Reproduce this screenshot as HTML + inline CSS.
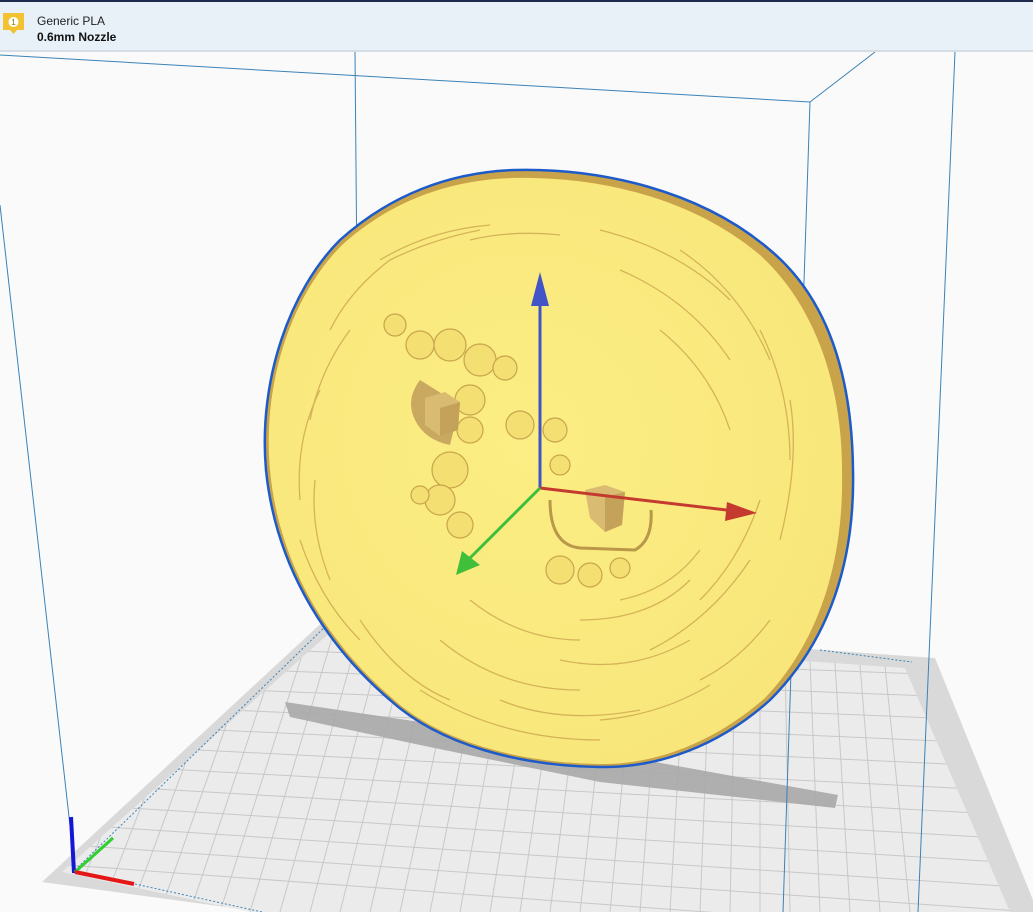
<!DOCTYPE html><html><head><meta charset="utf-8"><style>
html,body{margin:0;padding:0;width:1033px;height:912px;overflow:hidden;background:#fafafa;font-family:"Liberation Sans","DejaVu Sans",sans-serif}
.hdr{position:absolute;left:0;top:0;width:1033px;height:52px;background:#e8f0f8;border-top:2px solid #1d2a4d;border-bottom:2px solid #d6dde4;box-sizing:border-box;overflow:hidden}
.t1{position:absolute;left:37px;top:12px;font-size:12px;color:#222}
.t2{position:absolute;left:37px;top:28px;font-size:12px;color:#111;font-weight:bold}
svg{position:absolute;left:0;top:0}
</style></head><body>
<svg width="1033" height="912" viewBox="0 0 1033 912">
<defs>
<clipPath id="pl"><polygon points="62,872 335,628 905,668 1010,912 250,912"/></clipPath>
<radialGradient id="dg" cx="0.45" cy="0.45" r="0.6"><stop offset="0" stop-color="#fcee84"/><stop offset="1" stop-color="#f8e67a"/></radialGradient>
</defs>
<polygon points="42,882 330,615 935,658 1033,900 1033,912 262,912" fill="#d9d9d9"/>
<polygon points="62,872 335,628 905,668 1010,912 250,912" fill="#ebebeb"/>
<g clip-path="url(#pl)" stroke="#c8c8c8" stroke-width="1">
<line x1="335" y1="628" x2="250" y2="912"/><line x1="360" y1="630" x2="280" y2="912"/><line x1="385" y1="631" x2="310" y2="912"/><line x1="410" y1="633" x2="340" y2="912"/><line x1="435" y1="635" x2="370" y2="912"/><line x1="460" y1="637" x2="400" y2="912"/><line x1="485" y1="638" x2="430" y2="912"/><line x1="510" y1="640" x2="460" y2="912"/><line x1="535" y1="642" x2="490" y2="912"/><line x1="560" y1="644" x2="520" y2="912"/><line x1="585" y1="645" x2="550" y2="912"/><line x1="610" y1="647" x2="580" y2="912"/><line x1="635" y1="649" x2="610" y2="912"/><line x1="660" y1="650" x2="640" y2="912"/><line x1="685" y1="652" x2="670" y2="912"/><line x1="710" y1="654" x2="700" y2="912"/><line x1="735" y1="656" x2="730" y2="912"/><line x1="760" y1="657" x2="760" y2="912"/><line x1="785" y1="659" x2="790" y2="912"/><line x1="810" y1="661" x2="820" y2="912"/><line x1="835" y1="663" x2="850" y2="912"/><line x1="860" y1="665" x2="880" y2="912"/><line x1="885" y1="666" x2="910" y2="912"/><line x1="310" y1="630" x2="220" y2="912"/><line x1="285" y1="630" x2="190" y2="912"/><line x1="260" y1="630" x2="160" y2="912"/><line x1="235" y1="630" x2="130" y2="912"/><line x1="210" y1="630" x2="100" y2="912"/><line x1="185" y1="630" x2="70" y2="912"/>
<line x1="0" y1="660" x2="1033" y2="700"/><line x1="0" y1="680" x2="1033" y2="722"/><line x1="0" y1="700" x2="1033" y2="745"/><line x1="0" y1="720" x2="1033" y2="768"/><line x1="0" y1="740" x2="1033" y2="792"/><line x1="0" y1="760" x2="1033" y2="816"/><line x1="0" y1="780" x2="1033" y2="840"/><line x1="0" y1="800" x2="1033" y2="864"/><line x1="0" y1="820" x2="1033" y2="888"/><line x1="0" y1="840" x2="1033" y2="912"/><line x1="0" y1="860" x2="1033" y2="936"/><line x1="0" y1="640" x2="1033" y2="678"/>
</g>
<polygon points="285,702 420,722 600,752 838,795 835,808 600,782 420,745 290,717" fill="#a8a8a8" opacity="0.9"/>
<g stroke="#3b82b8" stroke-width="1" fill="none">
<line x1="0" y1="55" x2="810" y2="102"/><line x1="810" y1="102" x2="875" y2="52"/>
<line x1="810" y1="102" x2="783" y2="912"/><line x1="955" y1="52" x2="918" y2="912"/>
<line x1="355" y1="52" x2="360" y2="625"/><line x1="0" y1="205" x2="75" y2="870"/>
<line x1="75" y1="870" x2="330" y2="622" stroke-dasharray="2,2"/>
<line x1="135" y1="884" x2="262" y2="912" stroke-dasharray="2,2"/>
<line x1="820" y1="650" x2="912" y2="662" stroke-dasharray="2,2"/>
</g>
<path d="M515,170 C600,168 700,190 770,250 C830,300 852,380 853,470 C855,560 830,640 770,700 C720,745 660,768 600,767 C520,766 440,745 390,700 C320,640 275,560 266,470 C258,380 290,290 340,240 C390,195 450,172 515,170Z" fill="#c9a34a"/>
<path d="M512,178 C595,176 690,196 760,255 C815,305 842,385 842,470 C844,560 820,640 765,698 C715,742 655,765 600,764 C520,763 440,742 392,698 C322,638 278,558 270,470 C262,382 292,295 342,245 C392,200 450,180 512,178Z" fill="url(#dg)"/>
<g stroke="#c9a24c" stroke-width="1.3" fill="none" opacity="0.75">
<path d="M330,330 q20,-40 60,-70 q40,-20 90,-30"/><path d="M310,420 q10,-50 40,-90"/><path d="M300,500 q-5,-60 20,-110"/><path d="M330,580 q-20,-50 -15,-100"/><path d="M600,230 q80,20 130,70"/><path d="M620,270 q70,30 110,90"/><path d="M660,330 q50,40 70,100"/><path d="M760,330 q30,60 30,130"/><path d="M700,600 q40,-40 60,-100"/><path d="M650,650 q60,-30 100,-90"/><path d="M440,640 q60,50 140,50"/><path d="M420,690 q80,50 180,50"/><path d="M500,700 q60,25 140,10"/><path d="M360,620 q40,60 90,80"/><path d="M580,620 q70,0 110,-40"/><path d="M560,660 q70,15 130,-20"/><path d="M700,680 q40,-20 70,-60"/><path d="M600,720 q60,-5 110,-35"/><path d="M470,240 q40,-10 90,-5"/><path d="M380,260 q50,-30 110,-35"/>
<path d="M300,540 q20,60 60,100"/><path d="M680,250 q60,40 90,110"/><path d="M790,400 q10,60 -10,140"/><path d="M470,600 q50,40 110,40"/><path d="M620,600 q50,-10 80,-50"/>
</g>
<path d="M515,170 C600,168 700,190 770,250 C830,300 852,380 853,470 C855,560 830,640 770,700 C720,745 660,768 600,767 C520,766 440,745 390,700 C320,640 275,560 266,470 C258,380 290,290 340,240 C390,195 450,172 515,170Z" fill="none" stroke="#1c5bc9" stroke-width="2.5"/>
<g fill="#f3df72" stroke="#c9a44c" stroke-width="1.2">
<circle cx="395" cy="325" r="11"/><circle cx="420" cy="345" r="14"/><circle cx="450" cy="345" r="16"/><circle cx="480" cy="360" r="16"/><circle cx="505" cy="368" r="12"/><circle cx="470" cy="400" r="15"/><circle cx="470" cy="430" r="13"/><circle cx="450" cy="470" r="18"/><circle cx="440" cy="500" r="15"/><circle cx="460" cy="525" r="13"/><circle cx="420" cy="495" r="9"/><circle cx="520" cy="425" r="14"/><circle cx="555" cy="430" r="12"/><circle cx="560" cy="465" r="10"/><circle cx="560" cy="570" r="14"/><circle cx="590" cy="575" r="12"/><circle cx="620" cy="568" r="10"/>
</g>
<path d="M420,380 q-15,20 -5,40 q10,20 35,25 l10,-40z" fill="#c9a860"/>
<polygon points="425,398 445,392 460,402 458,430 440,436 425,425" fill="#d9bb72"/><polygon points="440,408 460,402 458,430 440,436" fill="#c5a25a"/>
<path d="M550,500 q0,45 30,48 l55,2 q18,-10 16,-40" fill="none" stroke="#b9984a" stroke-width="3"/>
<polygon points="585,490 605,485 625,492 622,525 605,532 590,518" fill="#d9bb72"/><polygon points="605,497 625,492 622,525 605,532" fill="#c5a25a"/>
<line x1="540" y1="488" x2="540" y2="300" stroke="#4154c4" stroke-width="3"/>
<polygon points="540,272 531,306 549,306" fill="#4255c8"/>
<line x1="540" y1="488" x2="735" y2="511" stroke="#c43a2f" stroke-width="3"/>
<polygon points="757,513 727,502 725,521" fill="#c43a2f"/>
<line x1="540" y1="488" x2="470" y2="558" stroke="#3fbf3a" stroke-width="3"/>
<polygon points="456,575 462,551 480,565" fill="#3fbf3a"/>
<line x1="71" y1="817" x2="74" y2="873" stroke="#1517d6" stroke-width="4"/>
<line x1="75" y1="872" x2="113" y2="838" stroke="#2fd12f" stroke-width="3"/>
<line x1="75" y1="872" x2="134" y2="884" stroke="#e51616" stroke-width="4"/>
</svg>
<div class="hdr">
<svg width="26" height="26" style="left:1px;top:9px" viewBox="0 0 26 26"><path d="M2,2 h21 v17 h-7 l-3.5,4 l-3.5,-4 h-7z" fill="#f3c230"/><circle cx="12.5" cy="11" r="5" fill="#fff"/><text x="12.5" y="14" font-size="8" text-anchor="middle" fill="#8a6a00" font-family="Liberation Sans">1</text></svg>
<div class="t1">Generic PLA</div><div class="t2">0.6mm Nozzle</div>
</div>
</body></html>
